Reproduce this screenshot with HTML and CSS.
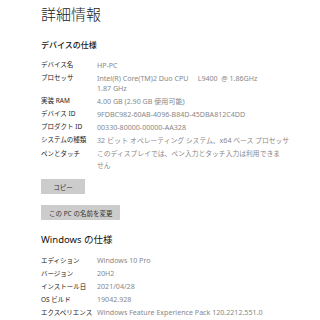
FILE: index.html
```html
<!DOCTYPE html>
<html lang="ja">
<head>
    <meta charset="UTF-8">
    <title>詳細情報</title>
    <link rel="stylesheet" href="styles.css">
</head>
<body>
    <main class="page">
        <h1 class="title">詳細情報</h1>

        <h2 class="section-title">デバイスの仕様</h2>
        <dl class="specs">
            <div class="row"><dt>デバイス名</dt><dd>HP-PC</dd></div>
            <div class="row"><dt>プロセッサ</dt><dd><span class="pre">Intel(R) Core(TM)2 Duo CPU     L9400  @ 1.86GHz</span><br>1.87 GHz</dd></div>
            <div class="row"><dt>実装 RAM</dt><dd>4.00 GB (2.90 GB 使用可能)</dd></div>
            <div class="row"><dt>デバイス ID</dt><dd>9FDBC982-60AB-4096-B84D-45DBA812C4DD</dd></div>
            <div class="row"><dt>プロダクト ID</dt><dd>00330-80000-00000-AA328</dd></div>
            <div class="row"><dt>システムの種類</dt><dd>32 ビット <span class="ja">オペレーティング システム、</span>x64 <span class="ja">ベース プロセッサ</span></dd></div>
            <div class="row"><dt>ペンとタッチ</dt><dd><span class="ja">このディスプレイでは、ペン入力とタッチ入力は利用できま</span><br><span class="ja">せん</span></dd></div>
        </dl>

        <div class="actions">
            <button class="btn btn-copy">コピー</button>
            <button class="btn">この PC の名前を変更</button>
        </div>

        <h2 class="section-title win">Windows の仕様</h2>
        <dl class="specs">
            <div class="row"><dt>エディション</dt><dd>Windows 10 Pro</dd></div>
            <div class="row"><dt>バージョン</dt><dd>20H2</dd></div>
            <div class="row"><dt>インストール日</dt><dd>2021/04/28</dd></div>
            <div class="row"><dt>OS ビルド</dt><dd>19042.928</dd></div>
            <div class="row"><dt>エクスペリエンス</dt><dd>Windows Feature Experience Pack 120.2212.551.0</dd></div>
        </dl>
    </main>
</body>
</html>
```

FILE: styles.css
```css
* {
  margin: 0;
  padding: 0;
  box-sizing: border-box;
}

body {
    width: 320px;
    height: 320px;
    overflow: hidden;
    background: #fff;
    font-family: "Noto Sans", "Noto Sans CJK JP", sans-serif;
    color: #222;
}

.page {
    display: flex;
    flex-direction: column;
    align-items: flex-start;
    padding-left: 41px;
    padding-top: 4px;
}

.title {
    font-size: 15px;
    font-weight: 300;
    line-height: 20px;
    color: #1a1a1a;
}

.section-title {
    margin-top: 14px;
    font-size: 8px;
    font-weight: 500;
    line-height: 14px;
    color: #111;
}

.section-title.win {
    margin-top: 13px;
    font-size: 9.5px;
    font-weight: 400;
}

.specs {
    margin-top: 6.75px;
    display: flex;
    flex-direction: column;
}

.row {
    display: flex;
    padding: 1px 0;
}

.row dt,
.row dd {
    line-height: 10.5px;
    white-space: nowrap;
}

.row dt {
    width: 56px;
    flex-shrink: 0;
    padding-top: 0.5px;
    font-size: 6.5px;
    color: #222;
}

.row dd {
    font-size: 7.1px;
    color: #888;
}

.row dd .ja {
    font-size: 6.8px;
}

.pre {
    white-space: pre;
}

.actions {
    margin-top: 7px;
    display: flex;
    flex-direction: column;
    align-items: flex-start;
    gap: 11px;
}

.btn {
    border: none;
    background: #cccccc;
    color: #333;
    font-family: inherit;
    font-size: 6.5px;
    height: 15px;
    padding: 0 8px;
}

.btn-copy {
    width: 44px;
}
```
